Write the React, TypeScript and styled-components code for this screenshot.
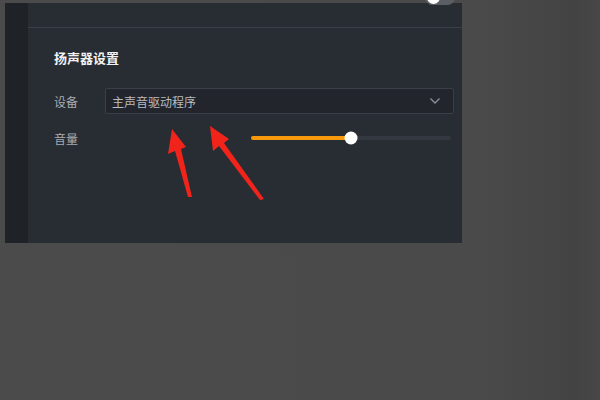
import React from 'react';
import styled, { createGlobalStyle } from 'styled-components';

const GlobalStyle = createGlobalStyle`
  html, body {
    margin: 0;
    padding: 0;
    width: 600px;
    height: 400px;
    overflow: hidden;
    background: #4a4a4a;
    font-family: "Noto Sans CJK SC", "Noto Sans", sans-serif;
  }
`;

function SpeakerSettings() {
  const volume = 50;
  return (
    <Page>
      <GlobalStyle />
      <Window>
        <Toggle>
          <Knob />
        </Toggle>
        <Sidebar />
        <Main>
          <Header />
          <Content>
            <Title>扬声器设置</Title>
            <Row>
              <Label>设备</Label>
              <Select>
                <span>主声音驱动程序</span>
                <svg width="12" height="8" viewBox="0 0 12 8">
                  <path d="M1.5 1.5 L6 6 L10.5 1.5" fill="none" stroke="#8a8f98" strokeWidth="1.4" />
                </svg>
              </Select>
            </Row>
            <Row>
              <Label>音量</Label>
              <Slider>
                <Track>
                  <Fill style={{ width: `${volume}%` }} />
                  <Thumb style={{ left: `${volume}%` }} />
                </Track>
              </Slider>
            </Row>
          </Content>
        </Main>
      </Window>
      <Arrows width="600" height="400" viewBox="0 0 600 400">
        <polygon points="172,129 186,147 181,149 192,197 188,197 175,151 168,154" fill="#f0241b" />
        <polygon points="210,126 229,139 224,143 264,199 260,200 219,146 213,151" fill="#f0241b" />
      </Arrows>
    </Page>
  );
}

const Page = styled.div`
  position: relative;
  width: 600px;
  height: 400px;
  padding: 3px 0 0 5px;
  box-sizing: border-box;
  background: linear-gradient(90deg, #4b4b4b 0%, #4a4a4a 80%, #434343 96%, #474747 100%);
`;

const Window = styled.div`
  position: relative;
  display: flex;
  width: 457px;
  height: 240px;
`;

const Sidebar = styled.div`
  width: 23px;
  background: #1f2227;
`;

const Main = styled.div`
  flex: 1;
  display: flex;
  flex-direction: column;
  background: #282c33;
`;

const Header = styled.div`
  height: 24px;
  border-bottom: 1px solid #3b3f47;
`;

const Content = styled.div`
  padding: 21px 8px 0 26px;
  display: flex;
  flex-direction: column;
`;

const Title = styled.div`
  font-size: 13px;
  font-weight: 700;
  color: #f2f2f2;
  line-height: 18px;
  margin-bottom: 21px;
`;

const Row = styled.div`
  display: flex;
  align-items: center;
  height: 26px;
  margin-bottom: 11px;
`;

const Label = styled.div`
  width: 51px;
  font-size: 12px;
  color: #a9adb3;
`;

const Select = styled.div`
  flex: 1;
  height: 26px;
  box-sizing: border-box;
  display: flex;
  align-items: center;
  justify-content: space-between;
  padding: 0 12px 0 6px;
  background: #22252b;
  border: 1px solid #3a3e46;
  border-radius: 2px;
  font-size: 12px;
  color: #b9bcc1;
`;

const Slider = styled.div`
  margin-left: 146px;
  width: 200px;
  display: flex;
  align-items: center;
`;

const Track = styled.div`
  position: relative;
  width: 100%;
  height: 4px;
  border-radius: 2px;
  background: #343840;
`;

const Fill = styled.div`
  height: 100%;
  border-radius: 2px;
  background: #f7990c;
`;

const Thumb = styled.div`
  position: absolute;
  top: 50%;
  width: 13px;
  height: 13px;
  border-radius: 50%;
  background: #ffffff;
  transform: translate(-50%, -50%);
`;

const Toggle = styled.div`
  position: absolute;
  top: -13px;
  right: 7px;
  width: 30px;
  height: 15px;
  border-radius: 8px;
  background: #5b5e63;
`;

const Knob = styled.div`
  position: absolute;
  left: 2px;
  top: 1px;
  width: 13px;
  height: 13px;
  border-radius: 50%;
  background: #ffffff;
`;

const Arrows = styled.svg`
  position: absolute;
  left: 0;
  top: 0;
  pointer-events: none;
`;

export default SpeakerSettings;
